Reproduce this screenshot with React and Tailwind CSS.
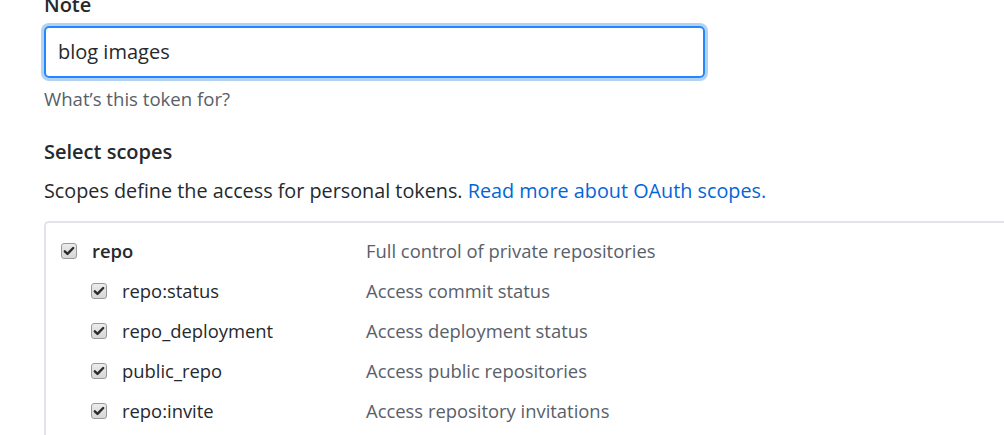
import React from "react";

const scopes = [
  { name: "repo", desc: "Full control of private repositories", parent: true },
  { name: "repo:status", desc: "Access commit status" },
  { name: "repo_deployment", desc: "Access deployment status" },
  { name: "public_repo", desc: "Access public repositories" },
  { name: "repo:invite", desc: "Access repository invitations" },
];

function Check() {
  return (
    <span className="flex h-[16px] w-[16px] shrink-0 items-center justify-center rounded-[3px] border border-[#9a9a9a] bg-gradient-to-b from-[#ececec] to-[#d6d6d6]">
      <svg viewBox="0 0 12 12" className="h-[12px] w-[12px]">
        <path d="M1.8 6.3l2.7 2.6L10.2 3" fill="none" stroke="#2b2b2b" strokeWidth="2.4" strokeLinecap="round" strokeLinejoin="round" />
      </svg>
    </span>
  );
}

export default function App() {
  return (
    <div className="h-screen overflow-hidden bg-white font-['Open_Sans',sans-serif] text-[#24292e]">
      <div className="-mt-[10px] pl-[44px]">
        <div className="text-[20px] font-semibold leading-[30px]">Note</div>
        <div className="mt-[6px] w-[661px] rounded-[5px] border-2 border-[#2188ff] px-[12px] py-[9px] text-[20px] leading-[30px] shadow-[0_0_0_3px_rgba(3,102,214,0.3)]">
          blog images
        </div>
        <div className="mt-[8px] text-[18.6px] leading-[26px] text-[#586069]">What’s this token for?</div>
        <div className="mt-[26px] text-[20px] font-semibold leading-[28px]">Select scopes</div>
        <div className="mt-[11px] text-[19.8px] leading-[28px]">
          Scopes define the access for personal tokens.{" "}
          <a className="text-[#0366d6]">Read more about OAuth scopes.</a>
        </div>
        <div className="mt-[16px] rounded-l-[5px] border-2 border-r-0 border-[#e1e4e8] pb-[40px] pl-[15px] pt-[8px]">
          {scopes.map((s) => (
            <div key={s.name} className="flex h-[40px] items-center">
              <div className={`flex items-center gap-[15px] ${s.parent ? "w-[305px]" : "ml-[30px] w-[275px]"}`}>
                <Check />
                <span className={`text-[18.4px] ${s.parent ? "font-semibold" : ""}`}>{s.name}</span>
              </div>
              <span className="text-[18.4px] text-[#586069]">{s.desc}</span>
            </div>
          ))}
        </div>
      </div>
    </div>
  );
}
